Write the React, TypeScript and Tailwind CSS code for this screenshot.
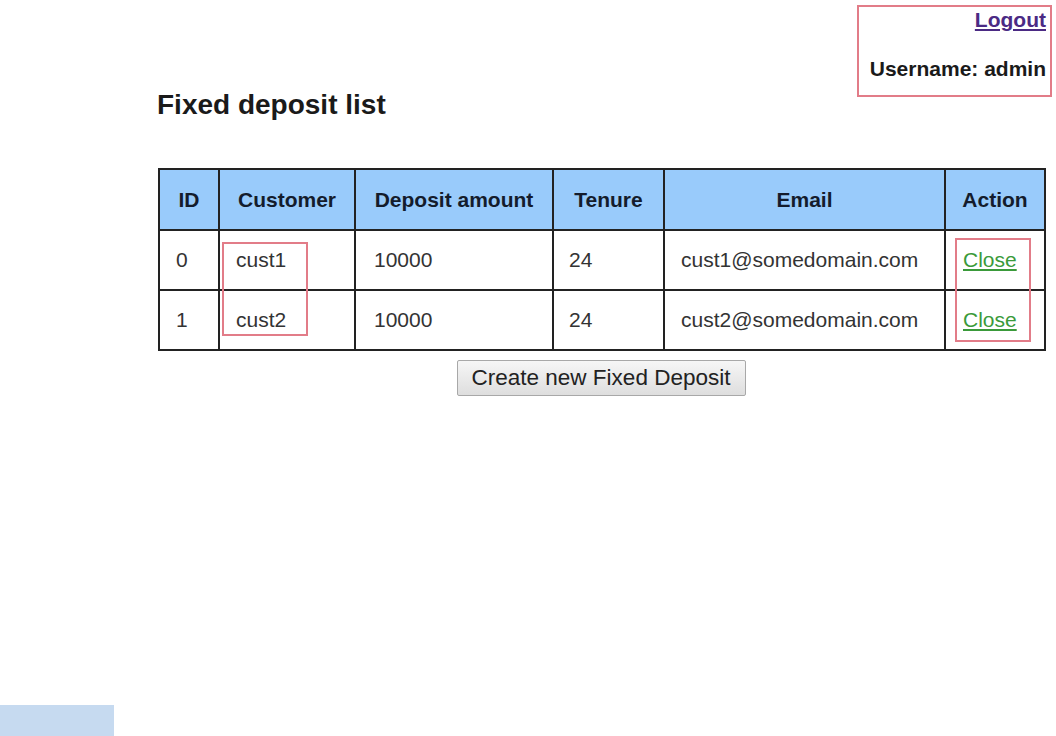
import React from "react";

const rows = [
  { id: "0", customer: "cust1", amount: "10000", tenure: "24", email: "cust1@somedomain.com" },
  { id: "1", customer: "cust2", amount: "10000", tenure: "24", email: "cust2@somedomain.com" },
];

export default function App() {
  return (
    <div
      className="relative w-[1056px] h-[736px] bg-white flex flex-col overflow-hidden text-[#222]"
      style={{ fontFamily: '"Liberation Sans", Arial, sans-serif' }}
    >
      <div className="flex items-start justify-between">
        <h1 className="ml-[157px] mt-[89px] text-[28px] leading-[32px] font-bold text-[#1a1a1a]">
          Fixed deposit list
        </h1>
        <div className="mt-[5px] mr-[4px] w-[195px] h-[92px] border-2 border-[#e27c88] flex flex-col items-end pr-[4px] pt-[1px]">
          <a href="#" className="text-[21px] leading-[24px] font-bold text-[#4b2a84] underline">
            Logout
          </a>
          <div className="mt-[25px] text-[21px] leading-[24px] font-bold text-[#1a1a1a]">
            Username: admin
          </div>
        </div>
      </div>

      <div className="ml-[158px] mt-[47px] w-[886px] flex flex-col items-center">
        <div className="relative w-full">
          <table className="w-full table-fixed border-collapse border-2 border-[#222] text-[21px] leading-[24px]">
            <colgroup>
              <col className="w-[60px]" />
              <col className="w-[136px]" />
              <col className="w-[198px]" />
              <col className="w-[111px]" />
              <col className="w-[281px]" />
              <col className="w-[100px]" />
            </colgroup>
            <thead>
              <tr className="h-[61px] bg-[#99cbfb]">
                {["ID", "Customer", "Deposit amount", "Tenure", "Email", "Action"].map((h) => (
                  <th key={h} className="border-2 border-[#222] font-bold text-center text-[#141c2c]">
                    {h}
                  </th>
                ))}
              </tr>
            </thead>
            <tbody>
              {rows.map((r) => (
                <tr key={r.id} className="h-[60px] text-[#333]">
                  <td className="border-2 border-[#222] pl-[16px]">{r.id}</td>
                  <td className="border-2 border-[#222] pl-[16px]">{r.customer}</td>
                  <td className="border-2 border-[#222] pl-[18px]">{r.amount}</td>
                  <td className="border-2 border-[#222] pl-[15px]">{r.tenure}</td>
                  <td className="border-2 border-[#222] pl-[16px]">{r.email}</td>
                  <td className="border-2 border-[#222] pl-[17px]">
                    <a href="#" className="text-[#3a9a3a] underline">
                      Close
                    </a>
                  </td>
                </tr>
              ))}
            </tbody>
          </table>
          <div className="absolute left-[64px] top-[74px] w-[86px] h-[94px] border-2 border-[#e27c88]" />
          <div className="absolute left-[797px] top-[70px] w-[76px] h-[104px] border-2 border-[#e27c88]" />
        </div>
        <button className="mt-[9px] w-[289px] h-[36px] border border-[#a8a8a8] rounded-[2px] bg-gradient-to-b from-[#f6f6f6] to-[#dedede] text-[22.5px] leading-[26px] text-[#222]">
          Create new Fixed Deposit
        </button>
      </div>

      <div className="mt-auto w-[114px] h-[31px] bg-[#c6daf0]" />
    </div>
  );
}
